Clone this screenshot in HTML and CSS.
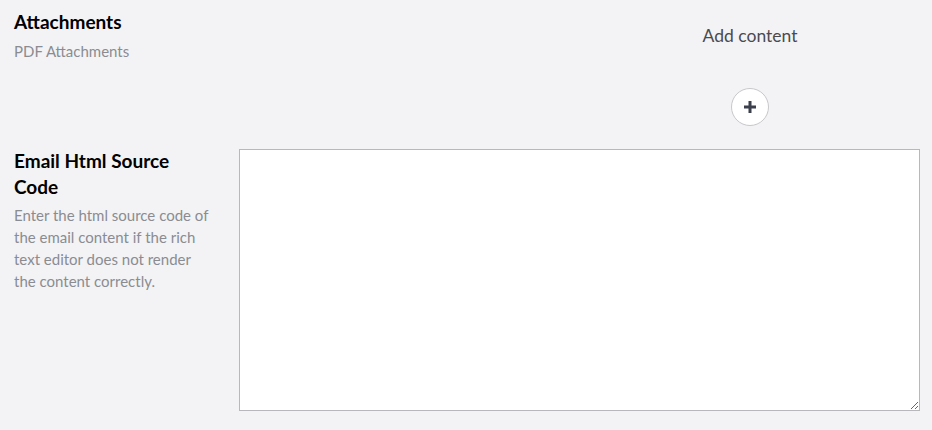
FILE: index.html
```html
<!DOCTYPE html>
<html>
<head>
<meta charset="utf-8">
<link rel="stylesheet" href="styles.css">
</head>
<body>
<div class="page">
  <div class="prop">
    <div class="label">
      <div class="title">Attachments</div>
      <div class="desc">PDF Attachments</div>
    </div>
    <div class="editor attach">
      <div class="add-area">
        <div class="add-text">Add content</div>
        <button class="add-btn" type="button" aria-label="Add content">
          <svg width="14" height="14" viewBox="0 0 14 14"><path d="M7 1v12M1 7h12" stroke="#3c3f4c" stroke-width="3" fill="none"/></svg>
        </button>
      </div>
    </div>
  </div>
  <div class="prop prop2">
    <div class="label label2">
      <div class="title">Email Html Source Code</div>
      <div class="desc">Enter the html source code of the email content if the rich text editor does not render the content correctly.</div>
    </div>
    <div class="editor">
      <textarea class="code"></textarea>
    </div>
  </div>
</div>
</body>
</html>
```
FILE: styles.css
```css
html, body {
  margin: 0;
  padding: 0;
  background: #f3f3f5;
  font-family: Lato, "Open Sans", sans-serif;
}
.page {
  padding: 9px 12px 0 14px;
}
.prop {
  display: flex;
  gap: 27px;
}
.label {
  width: 198px;
  flex: none;
}
.label2 {
  margin-top: -1px;
}
.title {
  font-size: 19px;
  font-weight: 700;
  color: #000;
  line-height: 26px;
}
.desc {
  font-size: 15px;
  color: #8a8c92;
  line-height: 22px;
  margin-top: 5px;
}
.label2 .desc {
  margin-top: 4px;
}
.editor {
  flex: 1;
}
.attach {
  display: flex;
  justify-content: flex-end;
}
.add-area {
  width: 340px;
  margin-right: 170px;
  display: flex;
  flex-direction: column;
  align-items: center;
  padding-top: 15px;
  transform: translateX(170px);
}
.add-text {
  font-size: 17.5px;
  color: #4a4a4f;
  line-height: 24px;
}
.add-btn {
  margin-top: 40px;
  width: 38px;
  height: 38px;
  border-radius: 50%;
  border: 1px solid #c8c8cc;
  background: #fff;
  display: flex;
  align-items: center;
  justify-content: center;
  padding: 0;
}
.prop2 {
  margin-top: 23px;
}
.code {
  display: block;
  box-sizing: border-box;
  width: 100%;
  height: 262px;
  border: 1px solid #b8b8bc;
  background: #fff;
  margin: 0;
}
```
